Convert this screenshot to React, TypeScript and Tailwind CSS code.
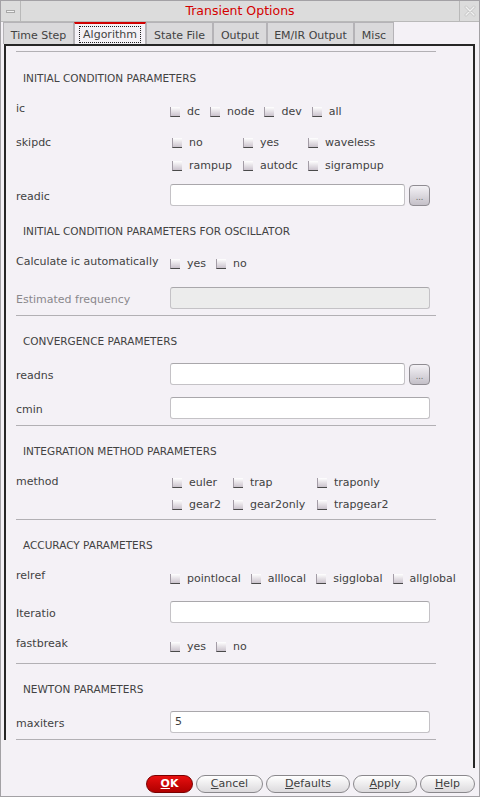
import React from 'react';

const font = { fontFamily: '"DejaVu Sans", Verdana, sans-serif' };

const tabs = [
  { label: "Time Step", w: "w-[71px]" },
  { label: "Algorithm", w: "w-[72px]", active: true },
  { label: "State File", w: "w-[67px]" },
  { label: "Output", w: "w-[54px]" },
  { label: "EM/IR Output", w: "w-[87px]" },
  { label: "Misc", w: "w-[40px]" },
];

function Box() {
  return (
    <span className="inline-block w-[10px] h-[10px] shrink-0 border-b border-l border-b-[#4a4a4a] border-l-[#a39ca6] bg-linear-to-b from-white to-[#cbc3cd]" />
  );
}

function Check({ label }: { label: string }) {
  return (
    <span className="flex items-center gap-[7px] h-[18px] whitespace-nowrap">
      <Box />
      <span>{label}</span>
    </span>
  );
}

function Inline({ items }: { items: string[] }) {
  return (
    <div className="flex items-center gap-[10px]">
      {items.map((i) => (
        <Check key={i} label={i} />
      ))}
    </div>
  );
}

function Input({ className = "w-[260px]", value = "", disabled = false }: { className?: string; value?: string; disabled?: boolean }) {
  return (
    <div
      className={`h-[22px] rounded-[3px] border border-[#c4c2c6] border-t-[#a9a7ab] flex items-center px-[4px] ${className} ${disabled ? 'bg-[#ececec]' : 'bg-white'}`}
    >
      {value}
    </div>
  );
}

function Browse() {
  return (
    <div className="ml-[4px] w-[21px] h-[21px] rounded-[4px] border border-[#8f8c92] bg-linear-to-b from-[#f4f2f6] to-[#c4c0c8] flex items-end justify-center pb-[3px] text-[8px] leading-[8px] text-[#666]">
      ...
    </div>
  );
}

function Sep({ mt }: { mt: string }) {
  return <div className={`${mt} w-[420px] h-px bg-[#b2b0b4]`} />;
}

function Header({ mt, children }: { mt: string; children: React.ReactNode }) {
  return <div className={`${mt} pl-[7px] h-[14px] leading-[14px] text-[10.5px]`}>{children}</div>;
}

function Row({ mt, label, lab = "", children, gray = false }: { mt: string; label: string; lab?: string; children: React.ReactNode; gray?: boolean }) {
  return (
    <div className={`${mt} flex items-start`}>
      <div className={`w-[154px] h-[18px] leading-[18px] shrink-0 ${lab} ${gray ? 'text-[#8a888c]' : ''}`}>{label}</div>
      {children}
    </div>
  );
}

function InputRow({ mt, label, children, gray = false }: { mt: string; label: string; children: React.ReactNode; gray?: boolean }) {
  return (
    <div className={`${mt} flex items-center h-[22px]`}>
      <div className={`w-[154px] leading-[18px] pt-[3px] shrink-0 ${gray ? 'text-[#8a888c]' : ''}`}>{label}</div>
      {children}
    </div>
  );
}

function Btn({ w, children, ok = false }: { w: string; children: React.ReactNode; ok?: boolean }) {
  return (
    <div
      className={`${w} h-[18px] rounded-full border flex items-center justify-center text-[11px] ${
        ok
          ? 'border-[#7a0000] bg-linear-to-b from-[#e81010] to-[#b00000] text-white font-bold'
          : 'border-[#8a888c] bg-linear-to-b from-white to-[#dcdadd] text-[#404040]'
      }`}
    >
      {children}
    </div>
  );
}

export default function App() {
  return (
    <div style={font} className="w-[480px] h-[797px] border border-[#a3a1a5] bg-[#f4f1f6] text-[11px] text-[#424242] flex flex-col overflow-hidden">
      {/* Title bar */}
      <div className="h-[21px] flex border-b border-[#b9b9b9] bg-[#dcdcdc] shrink-0">
        <div className="w-[20px] border-r border-[#b9b9b9] flex items-center justify-center">
          <span className="w-[9px] h-[3px] border border-[#a8a8a8] bg-[#f2f2f2]" />
        </div>
        <div className="flex-1 flex items-center justify-center text-[12.5px] text-[#d40000]">Transient Options</div>
        <div className="w-[20px] border-l border-[#b9b9b9] flex items-center justify-center">
          <svg width="12" height="12" viewBox="0 0 12 12">
            <path d="M2 2 L10 10 M10 2 L2 10" stroke="#c8c8c8" strokeWidth="3" strokeLinecap="round" />
            <path d="M2 2 L10 10 M10 2 L2 10" stroke="#f2f2f2" strokeWidth="1.2" strokeLinecap="round" />
          </svg>
        </div>
      </div>

      {/* Tabs */}
      <div className="h-[22px] flex pl-[2px] shrink-0">
        {tabs.map((t) =>
          t.active ? (
            <div key={t.label} className={`${t.w} h-[22px] border-t-2 border-t-[#d00000] border-x border-x-[#b5b3b7] bg-[#f4f1f6] flex justify-center pt-[2px]`}>
              <span className="h-[17px] px-[3px] leading-[15px] border border-dotted border-[#222]">{t.label}</span>
            </div>
          ) : (
            <div key={t.label} className={`${t.w} h-[22px] border border-b-0 border-[#b5b3b7] bg-[#dad9db] flex justify-center pt-[4px] leading-[17px]`}>
              {t.label}
            </div>
          )
        )}
      </div>

      {/* Panel */}
      <div className="ml-[3px] w-[471px] h-[724px] border-t-2 border-r-2 border-[#262626] shrink-0">
        <div className="border-l-2 border-[#262626] pl-[10px] flex flex-col">
          <Sep mt="mt-[5px]" />
          <Header mt="mt-[19px]">INITIAL CONDITION PARAMETERS</Header>
          <Row mt="mt-[18px]" label="ic" lab="-mt-[3px]">
            <Inline items={["dc", "node", "dev", "all"]} />
          </Row>
          <Row mt="mt-[13px]" label="skipdc">
            <div className="grid grid-cols-[71px_65px_auto] gap-y-[5px] pl-[2px]">
              <Check label="no" />
              <Check label="yes" />
              <Check label="waveless" />
              <Check label="rampup" />
              <Check label="autodc" />
              <Check label="sigrampup" />
            </div>
          </Row>
          <InputRow mt="mt-[9px]" label="readic">
            <Input className="w-[235px]" />
            <Browse />
          </InputRow>

          <Header mt="mt-[18px]">INITIAL CONDITION PARAMETERS FOR OSCILLATOR</Header>
          <Row mt="mt-[17px]" label="Calculate ic automatically" lab="-mt-[2px]">
            <Inline items={["yes", "no"]} />
          </Row>
          <InputRow mt="mt-[14px]" label="Estimated frequency" gray>
            <Input disabled />
          </InputRow>
          <Sep mt="mt-[6px]" />

          <Header mt="mt-[18px]">CONVERGENCE PARAMETERS</Header>
          <InputRow mt="mt-[15px]" label="readns">
            <Input className="w-[235px]" />
            <Browse />
          </InputRow>
          <InputRow mt="mt-[12px]" label="cmin">
            <Input />
          </InputRow>
          <Sep mt="mt-[6px]" />

          <Header mt="mt-[18px]">INTEGRATION METHOD PARAMETERS</Header>
          <Row mt="mt-[16px]" label="method" lab="-mt-[1px]">
            <div className="grid grid-cols-[61px_84px_auto] gap-y-[4px] pl-[2px]">
              <Check label="euler" />
              <Check label="trap" />
              <Check label="traponly" />
              <Check label="gear2" />
              <Check label="gear2only" />
              <Check label="trapgear2" />
            </div>
          </Row>
          <Sep mt="mt-[5px]" />

          <Header mt="mt-[18px]">ACCURACY PARAMETERS</Header>
          <Row mt="mt-[18px]" label="relref" lab="-mt-[3px]">
            <Inline items={["pointlocal", "alllocal", "sigglobal", "allglobal"]} />
          </Row>
          <InputRow mt="mt-[13px]" label="Iteratio">
            <Input />
          </InputRow>
          <Row mt="mt-[15px]" label="fastbreak" lab="-mt-[3px]">
            <Inline items={["yes", "no"]} />
          </Row>
          <Sep mt="mt-[7px]" />

          <Header mt="mt-[18px]">NEWTON PARAMETERS</Header>
          <InputRow mt="mt-[15px]" label="maxiters">
            <Input value="5" />
          </InputRow>
          <Sep mt="mt-[6px]" />
        </div>
      </div>

      {/* Buttons */}
      <div className="mt-[7px] flex justify-end pr-[4px] gap-[3px]">
        <Btn w="w-[47px]" ok>
          <span><span className="underline">O</span>K</span>
        </Btn>
        <Btn w="w-[67px]">
          <span><span className="underline">C</span>ancel</span>
        </Btn>
        <Btn w="w-[84px]">
          <span><span className="underline">D</span>efaults</span>
        </Btn>
        <Btn w="w-[64px]">
          <span><span className="underline">A</span>pply</span>
        </Btn>
        <Btn w="w-[55px]">
          <span><span className="underline">H</span>elp</span>
        </Btn>
      </div>
    </div>
  );
}
